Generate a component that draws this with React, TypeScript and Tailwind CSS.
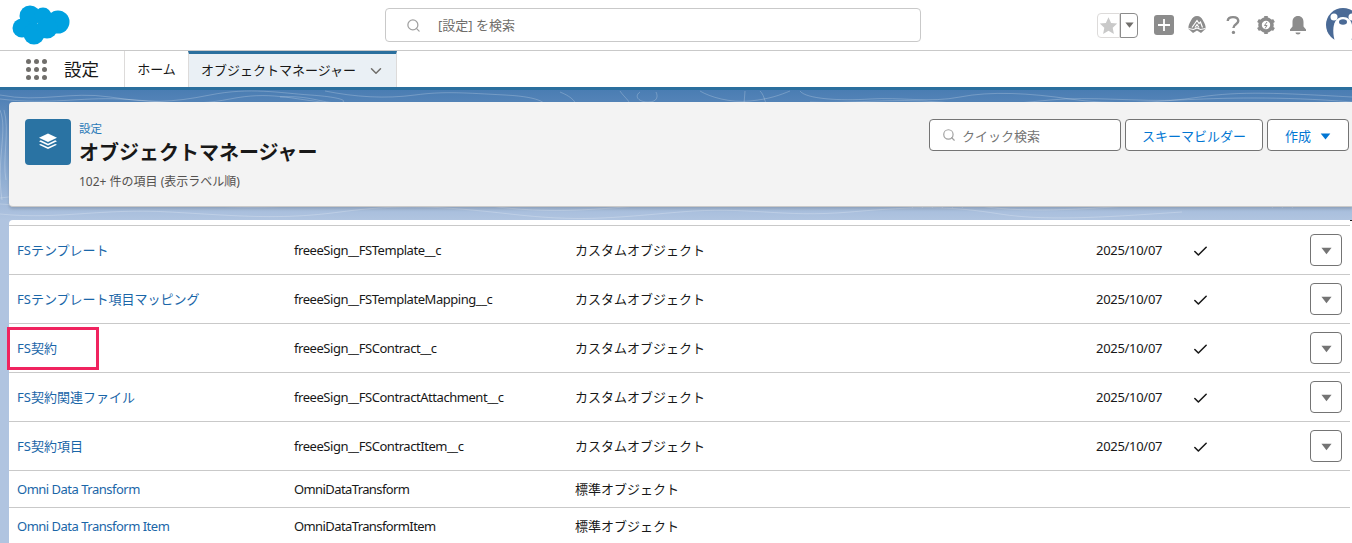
import { Check, ChevronDown, Search } from "lucide-react";

const rows = [
  { label: "FSテンプレート", api: "freeeSign__FSTemplate__c", type: "カスタムオブジェクト", date: "2025/10/07" },
  { label: "FSテンプレート項目マッピング", api: "freeeSign__FSTemplateMapping__c", type: "カスタムオブジェクト", date: "2025/10/07" },
  { label: "FS契約", api: "freeeSign__FSContract__c", type: "カスタムオブジェクト", date: "2025/10/07", marked: true },
  { label: "FS契約関連ファイル", api: "freeeSign__FSContractAttachment__c", type: "カスタムオブジェクト", date: "2025/10/07" },
  { label: "FS契約項目", api: "freeeSign__FSContractItem__c", type: "カスタムオブジェクト", date: "2025/10/07" },
];

const stdRows = [
  { label: "Omni Data Transform", api: "OmniDataTransform", type: "標準オブジェクト" },
  { label: "Omni Data Transform Item", api: "OmniDataTransformItem", type: "標準オブジェクト" },
];

function Caret({ className }: { className: string }) {
  return (
    <svg viewBox="0 0 12 8" className={className}>
      <path d="M0.5 0.5h11L6 7.5z" fill="currentColor" />
    </svg>
  );
}

function Cloud() {
  return (
    <svg viewBox="0 0 58 41" className="w-[58px] h-[41px]">
      <g fill="#00a1e0">
        <circle cx="18" cy="12" r="10.500" />
        <circle cx="31" cy="12" r="8.500" />
        <circle cx="46" cy="18" r="11.500" />
        <circle cx="10" cy="24" r="9.500" />
        <circle cx="22" cy="30" r="10.500" />
        <circle cx="35" cy="24" r="10.500" />
      </g>
    </svg>
  );
}

function Topo() {
  return (
    <svg viewBox="0 0 1352 130" preserveAspectRatio="none" className="absolute inset-0 w-full h-full" fill="none" stroke="#ffffff" strokeOpacity="0.22">
      <path d="M0 5c40 8 70-4 110 2s60 6 100-2 70-2 100 0 40 6 30 8c-20 0-30-8-60-6M325 1c30 6 60 8 90 4s50-2 90 0 40 10 40 10" />
      <path d="M0 9c50 6 80-2 120 0s70 8 110 0 60 0 100 4M560 2c10 4 14 8 16 12M620 1c4 6 10 10 10 14M640 2c-6 4-2 10 8 10s10-6 8-10" />
      <path d="M700 1c10 6 30 12 50 10s30-6 40-10M745 1l-1 13M760 1c4 4 4 8 6 12M800 1c6 8 40 10 70 8s60 4 90-2 70-4 110 2 90 4 130-2 80-4 152 0" />
      <path d="M810 12c40 2 80-4 130 0s70 2 110-2 90 2 130 0 100-4 172 2" />
      <path d="M0 20c8 20-4 50 2 90M4 20c6 20-2 50 2 70" />
      <path d="M0 108c60-8 90 6 150 2s100-8 160 0 90 8 150-2 100 8 160 2 110-8 170 0 100 6 150-2 90 6 160 2 100-4 252 0" />
      <path d="M0 114c50 4 90-6 150-2s100 8 170 2 110-6 170 2 100 4 170-2 100 6 170 0 100-6 150 2 120 2 172-2" />
      <path d="M0 124c60 6 100-6 170-2s110 8 170 0 100-6 170 2 100 4 170-2 100 6 170 0 100-6 150 2 120 2 182-2" />
      <path d="M920 106l-8 12M930 106l-8 12M940 106l-8 12M950 106l-8 12M960 106l-8 12M970 106l-8 12M1280 106l-8 12M1290 106l-8 12M1300 106l-8 12" />
    </svg>
  );
}

export default function App() {
  return (
    <div className="w-[1352px] h-[543px] overflow-hidden bg-white text-[13px] text-[#181818] font-['Noto_Sans','Noto_Sans_CJK_JP',sans-serif]">
      {/* Global header */}
      <header className="h-[51px] border-b border-[#c9c9c9] flex items-center relative">
        <div className="pl-[12px] -mt-[2px]">
          <Cloud />
        </div>
        <div className="absolute left-[385px] top-[8px] w-[536px] h-[34px] rounded border border-[#c9c9c9] flex items-center pl-[20px]">
          <Search size={15} className="text-[#a0a0a0]" strokeWidth={2} />
          <span className="ml-[17px] pt-[2px] text-[#706e6b] text-[13px]">[設定] を検索</span>
        </div>
        <div className="ml-auto flex items-center">
          <div className="flex h-[25px]">
            <div className="w-[23px] rounded-l border border-[#dddbda] flex items-center justify-center">
              <svg viewBox="0 0 24 24" className="w-[19px] h-[19px]">
                <path d="M12 1.500l3.300 7.200 7.700.9-5.700 5.300 1.500 7.700L12 18.700l-6.800 3.900 1.500-7.700L1 9.600l7.700-.9z" fill="#c9c9c9" />
              </svg>
            </div>
            <div className="w-[18px] rounded-r border border-[#8c8c8c] flex items-center justify-center">
              <Caret className="w-[9px] h-[6px] text-[#706e6b]" />
            </div>
          </div>
          <div className="w-[20px] h-[20px] rounded-[3px] bg-[#8c8c8c] flex items-center justify-center ml-[16px]">
            <svg viewBox="0 0 14 14" className="w-[14px] h-[14px]">
              <path d="M7 1v12M1 7h12" stroke="#fff" strokeWidth="1.800" />
            </svg>
          </div>
          <svg viewBox="0 0 20 20" className="w-[20px] h-[20px] ml-[13px]" fill="none">
            <path d="M10 1c3 0 4.500 1.500 6 4.500s3 5 2.500 8.500L14 18l-4-2.500L6 18l-4.500-4C1 10.500 2.500 8.500 4 5.500S7 1 10 1z" fill="#8c8c8c" />
            <path d="M5 12.500l5-7 2 3 1.500-1.500 2 5.500M8 12.500l2-3 2 3M1.500 13.500l5 1 3.500-1.500 3.500 1.500 5-1" stroke="#fff" strokeWidth="1.200" />
          </svg>
          <svg viewBox="0 0 16 22" className="w-[14px] h-[20px] ml-[19px]" fill="none">
            <path d="M2 6.500C2 3.500 4.500 2 8 2s6 1.700 6 4.500c0 4-5.500 3.500-5.500 8" stroke="#8c8c8c" strokeWidth="2.800" />
            <circle cx="8.500" cy="19.500" r="1.900" fill="#8c8c8c" />
          </svg>
          <svg viewBox="0 0 20 20" className="w-[20px] h-[20px] ml-[16px]" fill="none">
            <circle cx="10" cy="10" r="6" stroke="#8c8c8c" strokeWidth="3.600" />
            <path d="M10 1v3M10 16v3M2 5.500l2.600 1.500M15.400 13l2.600 1.500M2 14.500L4.600 13M15.400 7L18 5.500" stroke="#8c8c8c" strokeWidth="3.600" />
            <path d="M11 7l-2.500 3.500H11L9 13.500" stroke="#8c8c8c" strokeWidth="1" />
          </svg>
          <svg viewBox="0 0 20 20" className="w-[20px] h-[20px] ml-[12px]">
            <path d="M10 1c3.500 0 5.500 2.500 5.500 6v4.500l2.500 3v1.500H2v-1.500l2.500-3V7c0-3.500 2-6 5.500-6z" fill="#8c8c8c" />
            <path d="M7.500 17.500h5c0 1.300-1.100 2-2.500 2s-2.500-.7-2.500-2z" fill="#8c8c8c" />
          </svg>
          <div className="w-[26px] overflow-hidden ml-[18px] h-[34px]">
            <svg viewBox="0 0 34 34" className="w-[34px] h-[34px] max-w-none">
              <circle cx="17" cy="17" r="17" fill="#4a6a96" />
              <circle cx="8" cy="9" r="3.500" fill="#fff" />
              <circle cx="26" cy="9" r="3.500" fill="#fff" />
              <path d="M9 34c-3-10-3-25 8-25s11 15 8 25z" fill="#fff" />
              <ellipse cx="17" cy="14" rx="4" ry="2.800" fill="#4a6a96" />
            </svg>
          </div>
        </div>
      </header>

      {/* App nav */}
      <nav className="h-[36px] flex items-stretch">
        <div className="w-[124px] pl-[26px] flex items-center">
          <div className="grid grid-cols-3 gap-[3px]">
            {[0, 1, 2, 3, 4, 5, 6, 7, 8].map((i) => (
              <span key={i} className="w-[5px] h-[5px] rounded-full bg-[#706e6b]" />
            ))}
          </div>
          <span className="ml-[17px] pt-[2px] text-[17.500px] leading-none">設定</span>
        </div>
        <div className="border-l border-[#dddbda] w-[64px] flex items-center justify-center text-[13px] pt-[1px]">ホーム</div>
        <div className="w-[209px] bg-[#eaf0f5] border-t-[3px] border-[#2a6f9e] border-x border-x-[#dddbda] flex items-center pl-[12px] text-[13px]">
          <span>オブジェクトマネージャー</span>
          <ChevronDown size={18} className="ml-[11px] text-[#706e6b]" />
        </div>
      </nav>

      {/* Page body */}
      <main className="relative h-[456px] border-t-[3px] border-[#2a6f9e] bg-gradient-to-b from-[#4a7db3] to-[#b0c4e0] to-[130px]">
        <div className="absolute inset-x-0 top-0 h-[130px]">
          <Topo />
        </div>
        <div className="relative pt-[12px] pl-[9px]">
          <section className="h-[105px] rounded-l bg-[#f3f3f3] border-b border-[#c9c9c9] shadow-[0_2px_3px_rgba(0,0,0,0.15)] pl-[16px] pt-[17px] pr-[3px] flex">
            <div className="w-[46px] h-[46px] rounded bg-[#2a73a3] flex items-center justify-center">
              <svg viewBox="0 0 20 20" className="w-[20px] h-[20px]" fill="#fff">
                <path d="M10 1.500l9 4.200-9 4.200-9-4.200z" />
                <path d="M2.800 8.300L10 11.700l7.200-3.400 1.800.9-9 4.200-9-4.200z" />
                <path d="M2.800 11.900L10 15.300l7.200-3.400 1.800.9-9 4.200-9-4.200z" />
              </svg>
            </div>
            <div className="ml-[8px]">
              <div className="text-[11.500px] leading-[20px] text-[#2b7ab8]">設定</div>
              <h1 className="text-[20px] leading-[28px] font-bold">オブジェクトマネージャー</h1>
              <p className="mt-[7px] text-[12px] leading-[16px] text-[#54514f]">102+ 件の項目 (表示ラベル順)</p>
            </div>
            <div className="ml-auto flex gap-[4px] h-[32px]">
              <div className="w-[192px] bg-white border border-[#747474] rounded flex items-center pl-[12px]">
                <Search size={14} className="text-[#a0a0a0]" />
                <span className="ml-[6px] pt-[3px] text-[#747474] text-[13px]">クイック検索</span>
              </div>
              <button className="w-[138px] pt-[3px] bg-white border border-[#747474] rounded text-[#0176d3] text-[13px]">スキーマビルダー</button>
              <button className="w-[82px] bg-white border border-[#747474] rounded text-[#0176d3] text-[13px] flex items-center pl-[17px]">
                <span className="pt-[3px]">作成</span>
                <Caret className="w-[11px] h-[7px] ml-[9px] mt-[2px]" />
              </button>
            </div>
          </section>

          <section className="mt-[13px] bg-white rounded-tl pt-[5px] h-[340px] relative">
            <span className="absolute right-0 top-0 w-[2px] h-[1px] bg-[#181818]" />
            <div className="border-t border-[#c9c9c9] mr-[2px]">
              {rows.map((row) => (
                <div key={row.label} className="relative h-[49px] flex items-center border-b border-[#c9c9c9]">
                  <a className="w-[285px] pl-[8px] pt-[2px] text-[#1a66a8]">{row.label}</a>
                  <span className="w-[281px] pt-[2px] tracking-[-0.45px]">{row.api}</span>
                  <span className="w-[521px] pt-[2px]">{row.type}</span>
                  <span className="w-[97px] pt-[2px] tracking-[-0.3px]">{row.date}</span>
                  <Check size={17} strokeWidth={2.2} className="text-[#181818] mt-[3px] -ml-[1px]" />
                  <button className="ml-[101px] w-[32px] h-[32px] bg-white border border-[#747474] rounded flex items-center justify-center">
                    <Caret className="w-[11px] h-[8px] text-[#747474] mt-[2px]" />
                  </button>
                  {row.marked && (
                    <div className="absolute left-[-2px] top-[3px] w-[92px] h-[43px] border-[3px] border-[#f0235f]" />
                  )}
                </div>
              ))}
              {stdRows.map((row) => (
                <div key={row.label} className="h-[37px] flex items-center border-b border-[#c9c9c9]">
                  <a className="w-[285px] pl-[8px] pt-[2px] text-[#1a66a8] tracking-[-0.5px]">{row.label}</a>
                  <span className="w-[281px] pt-[2px] tracking-[-0.6px]">{row.api}</span>
                  <span className="pt-[2px]">{row.type}</span>
                </div>
              ))}
            </div>
          </section>
        </div>
      </main>
    </div>
  );
}
